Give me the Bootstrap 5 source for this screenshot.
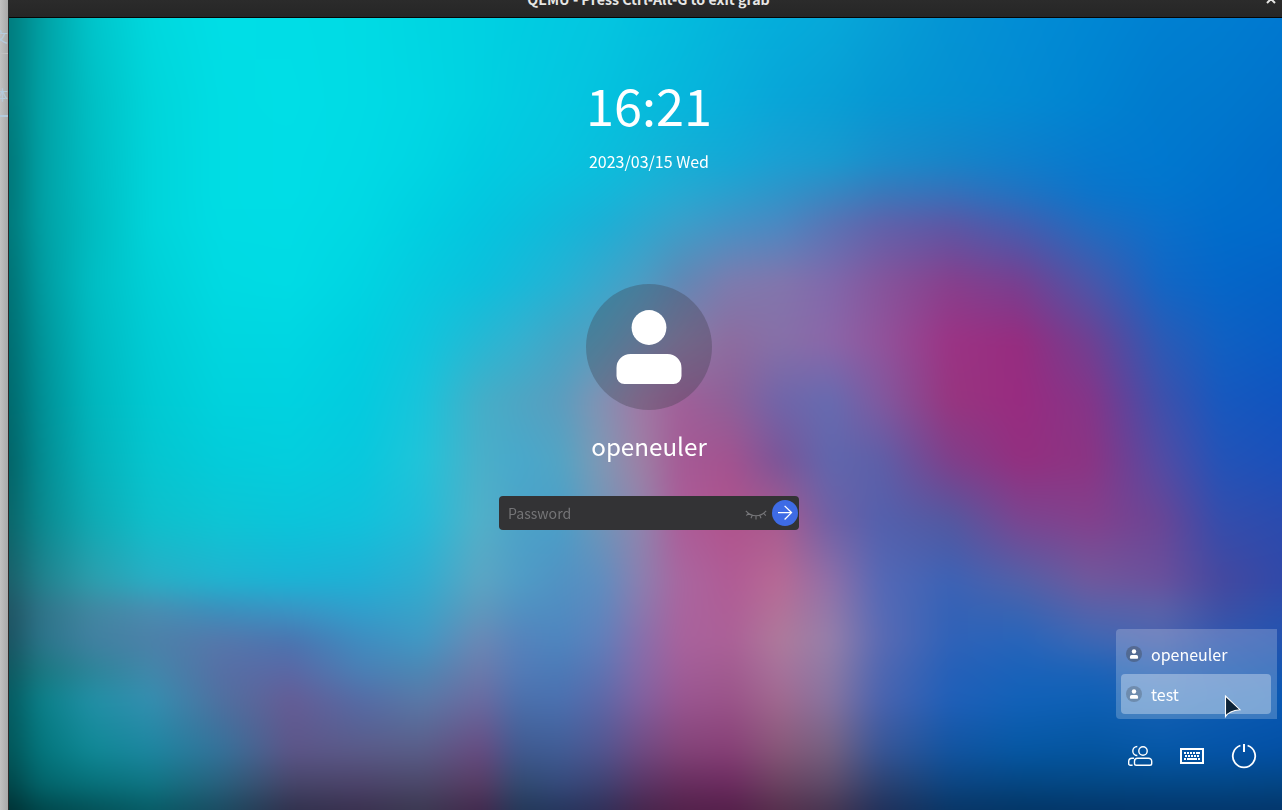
<!DOCTYPE html>
<html lang="en">
<head>
<meta charset="utf-8">
<meta name="viewport" content="width=device-width, initial-scale=1">
<title>QEMU</title>
<link href="https://cdn.jsdelivr.net/npm/bootstrap@5.3.0/dist/css/bootstrap.min.css" rel="stylesheet">
<style>
  body { font-family: "Noto Sans CJK SC", "Noto Sans", sans-serif; background: #b4b4b4; height: 810px; }
  .desk-edge { width: 8px; background: linear-gradient(90deg, #c1c1c1, #a9a9a9); color: #b4cbdd; font-size: 14px; line-height: 16px; }
  .desk-edge div { height: 20px; direction: rtl; white-space: nowrap; }
  .desk-edge .edge-a { margin-top: 28px; height: 26px; border-bottom: 1px solid #c0c0c0; }
  .desk-edge .edge-b { margin-top: 32px; height: 31px; border-bottom: 2px solid #b4cbdd; }
  .vm-window { border-left: 1px solid #2b2b2b; }
  .vm-title { height: 18px; background: linear-gradient(#2b2b2b, #262626); border-bottom: 1px solid #050505; color: #e6e6e4; font-size: 14.2px; font-weight: 700; padding-left: 6px; }
  .vm-title span { line-height: 22px; margin-top: -12px; }
  .vm-title svg { right: 6px; top: -6px; }
  .greeter { color: #fff; }
  .wallpaper { left: -40px; top: -40px; filter: blur(9px); }
  .clock { font-size: 50.5px; line-height: 60px; margin-top: 56px; }
  .date { font-size: 16px; line-height: 24px; margin-top: 15px; }
  .avatar { width: 126px; height: 126px; background: rgba(60,60,70,.32); margin-top: 111px; }
  .login-name { font-size: 24.2px; line-height: 36px; margin-top: 18px; }
  .password { width: 300px; height: 34px; background: #333335; border-radius: 4px; margin-top: 32px; padding-left: 9px; padding-right: 1px; }
  .password input { color: #fff; font-size: 14.1px; line-height: 22px; min-width: 0; }
  .password input::placeholder { color: #757577; opacity: 1; }
  .eye { margin-top: 3px; }
  .go { width: 26px; height: 26px; background: #3e6be5; margin-left: 5px; }
  .user-menu { right: 5px; top: 611px; width: 161px; height: 90px; background: rgba(255,255,255,.21); border-radius: 4px 0 0 4px; padding: 5px 6px 5px 5px; }
  .user-menu a { height: 40px; padding-left: 5px; color: #fff; font-size: 16px; line-height: 24px; border-radius: 4px; }
  .user-menu a.hovered { background: rgba(255,255,255,.33); }
  .user-menu svg { margin-right: 9px; }
  .tray { right: 25px; bottom: 40px; gap: 26px; }
  .pointer { left: 1215px; top: 676px; }
</style>
</head>
<body class="d-flex overflow-hidden">
<div class="desk-edge overflow-hidden flex-shrink-0">
  <div class="edge-a">文</div>
  <div class="edge-b">体</div>
</div>
<main class="vm-window flex-grow-1 d-flex flex-column overflow-hidden">
  <header class="vm-title position-relative d-flex justify-content-center overflow-hidden flex-shrink-0">
    <span>QEMU - Press Ctrl-Alt-G to exit grab</span>
    <svg class="position-absolute" width="10" height="10" viewBox="0 0 10 10" stroke="#e6e6e4" stroke-width="2"><path d="M1 1l8 8M9 1l-8 8"/></svg>
  </header>
  <section class="greeter position-relative flex-grow-1 overflow-hidden">
    <canvas id="wallpaper" class="wallpaper position-absolute" width="1353" height="872"></canvas>
    <div class="position-relative d-flex flex-column align-items-center" style="width:1280px">
      <div class="clock">16:21</div>
      <div class="date">2023/03/15 Wed</div>
      <div class="avatar rounded-circle">
        <svg width="126" height="126" viewBox="0 0 126 126" fill="#fff"><circle cx="63" cy="43.5" r="17.4"/><path d="M44.5 70h37a14 14 0 0 1 14 14v8a8 8 0 0 1-8 8h-49a8 8 0 0 1-8-8v-8a14 14 0 0 1 14-14z"/></svg>
      </div>
      <div class="login-name">openeuler</div>
      <form class="password d-flex align-items-center">
        <input class="form-control border-0 bg-transparent shadow-none p-0" type="text" placeholder="Password">
        <svg class="eye flex-shrink-0" width="22" height="12" viewBox="0 0 22 12" fill="none" stroke="#77777a" stroke-width="1.1"><path d="M.8 1.8Q5.5 6.8 11 6.8T21.2 1.8M3.5 4.2L1.4 6.6M7.2 6.2L6 9.2M11 6.8V10.4M14.8 6.2L16 9.2M18.5 4.2L20.8 6.6"/></svg>
        <button class="go btn rounded-circle border-0 p-0 d-flex flex-shrink-0" type="button" aria-label="Log in">
          <svg width="26" height="26" viewBox="0 0 26 26" fill="none" stroke="#fff" stroke-width="1.3"><path d="M6 12.6h13.500M12.600 5.900l6.900 6.700-6.900 6.900"/></svg>
        </button>
      </form>
    </div>
    <nav class="user-menu position-absolute d-flex flex-column">
      <a class="d-flex align-items-center text-decoration-none"><svg width="16" height="16" viewBox="0 0 16 16"><circle cx="8" cy="8" r="8" fill="#3f4650" fill-opacity=".42"/><circle cx="8" cy="5.5" r="2.2" fill="#fff"/><path d="M5.6 9h4.8a1.7 1.7 0 0 1 1.7 1.7v1.1a1 1 0 0 1-1 1H4.9a1 1 0 0 1-1-1v-1.100A1.700 1.700 0 0 1 5.600 9z" fill="#fff"/></svg>openeuler</a>
      <a class="hovered d-flex align-items-center text-decoration-none"><svg width="16" height="16" viewBox="0 0 16 16"><circle cx="8" cy="8" r="8" fill="#3f4650" fill-opacity=".3"/><circle cx="8" cy="5.500" r="2.200" fill="#fff"/><path d="M5.600 9h4.800a1.700 1.700 0 0 1 1.700 1.700v1.100a1 1 0 0 1-1 1H4.900a1 1 0 0 1-1-1v-1.100A1.700 1.700 0 0 1 5.600 9z" fill="#fff"/></svg>test</a>
    </nav>
    <div class="tray position-absolute d-flex align-items-center">
      <svg width="26" height="28" viewBox="0 0 26 28" fill="none" stroke="#fff" stroke-width="1.400"><circle cx="16" cy="9" r="4.200"/><path d="M10.300 4.500a4.500 4.500 0 0 0 0 9"/><path d="M10.500 16.300h11a3 3 0 0 1 3.200 3v2.200a1.800 1.800 0 0 1-1.800 1.800H9.300a1.800 1.800 0 0 1-1.800-1.800v-2.200a3 3 0 0 1 3-3zM7 16.300H5a3.300 3.300 0 0 0-3.300 3.300v2.100a1.600 1.600 0 0 0 1.600 1.600H5.600"/></svg>
      <svg width="26" height="28" viewBox="0 0 26 28" fill="none" stroke="#fff" stroke-width="2"><rect x="2" y="7" width="22" height="14"/><path stroke-dasharray="2 1" d="M5 11h13"/><path d="M17 11h4M8 17h10M5 17h2M19 17h2"/><path stroke-dasharray="2 1" d="M6 14h14"/></svg>
      <svg width="26" height="28" viewBox="0 0 26 28" fill="none" stroke="#fff" stroke-width="1.800"><path d="M9.400 3.500a11.200 11.200 0 1 0 7.200 0"/><path d="M13 2v8" stroke-width="2"/></svg>
    </div>
    <svg class="pointer position-absolute" width="20" height="26" viewBox="0 0 20 26"><path d="M1.500 2v20.500q3.500-5.700 14.500-6.800z" fill="#0d2236" stroke="#fff" stroke-width="1.100"/></svg>
  </section>
</main>
<script src="https://cdn.jsdelivr.net/npm/bootstrap@5.3.0/dist/js/bootstrap.bundle.min.js"></script>
<script>
// Colour mesh of the wallpaper: one row per y stop, one colour per x stop (window coordinates)
const xs = [9,40,90,150,220,290,360,420,480,520,560,600,640,680,730,780,830,880,950,1020,1090,1160,1220,1282];
const mesh = [
 [18,'007a7c 009fa3 00c4ca 00d8de 00dee6 00dde6 00dbe4 00d6e2 00d1e2 00cde1 02c9e1 04c6e0 03c0df 03bbdd 04b3dc 04addb 06a8d9 069fd6 0494d4 028dd5 0087d3 0080d1 007dd0 0078d0'],
 [100,'007a7c 00a0a4 00bfc4 00d5da 00dde4 00dee6 00dbe5 00d7e4 00d1e1 02cbe1 04c7e0 04c2df 05bcdc 06b6dc 08aeda 08a5d8 089fd5 0697d3 0590d2 038ad2 0083d1 007bce 0078cd 0073cb'],
 [160,'007577 00a0a4 00bdc3 00d4da 00dde4 00dde6 00dae5 00d5e3 00cce1 04c8e0 06c4df 0abedc 10b7d9 15afd6 14a8d6 1a9fd3 189acf 1a8dcb 1684c8 0f7ecb 067ace 0078cf 0073cc 006dca'],
 [193,'007577 00a0a4 00bcc2 00d4da 00dde4 00dde6 00d9e4 00d2e2 02c9e0 07c4de 0cbedc 12b8da 1cb1d6 25a9d2 2a9fce 2f94c9 3787c2 3a78ba 3670ba 2172c1 0c74ca 0375cd 0070cc 006cca'],
 [224,'007678 009fa3 00bbc0 00d4da 00dce4 00dce5 00d8e3 00cfe1 04c5df 0abfdc 12b8d9 1bb0d6 2ba8d0 3a9fca 4392c6 4a88c2 5874b5 5f62ab 5b57a5 425eb0 1f6cc0 0b6fca 006dcb 006acb'],
 [282,'007073 009a9f 00bdc3 00d0d7 00dae2 00dbe4 00d4e2 06cadf 0cc0dc 18b9d9 25b2d4 37a8cd 4b9dc4 6088b5 7d7bae 8275ac 8068ab 85559c 873f8c 773f90 4a56a9 1366c4 0566c8 0362c6'],
 [340,'006b6f 009499 00b9c0 00ccd5 00d6df 00d6e2 00cfe0 0ec6dd 25b8d4 35b0cf 44a5c6 559ec0 7290b5 8a7ea8 8d6c9f 8670a8 8b66a8 91539b 9b3384 962c7f 6f4092 2c5ab5 1060c2 085cc4'],
 [400,'00676b 008f95 00b5bc 00c9d2 00d2dd 00d2e0 03cbdf 18c4db 44aec8 4ea5c3 5a9dbf 8292b3 a078a5 a05f98 8e6098 7065a9 666bb0 80599f 97357f 982b80 843588 3f50ab 1758be 1054bf'],
 [460,'026266 038b91 05b0b8 05c5cf 03ccda 04cedd 08c8dd 20c4d9 4aafc9 48a8cb 52a4c4 7e98b5 9d80a5 a55a95 a3528f 7a5598 6066ad 5d5fa8 7f3f8a 932f7f 8b3483 534ba3 2353b7 1a50ba'],
 [520,'0a6468 0a888e 0fa9b2 0ebfcb 0dc5d4 0ac5da 10c2db 22bcd8 52b0c8 4ca2c8 4a9fc8 6f95b8 8f85ad ac5c98 b0538c a85a8f 6f60a5 5360ad 5358a0 7a4590 83408c 6a4595 344dac 2a4bae'],
 [580,'1a5e68 20808c 2c9dac 28aec5 20b3d0 1ab3d5 1fb0d5 2fadd0 5ca5c3 4f9cc6 5092c3 5e8ec0 8b7fb0 a9669f b05b95 b76a95 8f6fa8 5568b5 3c62b5 5260a8 70589c 6a509c 45489f 3148a8'],
 [610,'1f5362 2f7388 4186a0 4a8cb0 3c8ebc 3a94c4 309fcc 38a3c9 6098bc 5190c1 4f8cc1 5e87be 8978ae a9649e ae5e96 b37298 9278a9 576ab5 3462b6 3a64b2 5662aa 5a62a8 3d50a5 2a50ac'],
 [640,'1a5260 2a7489 4080a0 4c80a8 5577ab 4a74b0 3f8cc0 4098c4 6b88b5 5583bc 4d85bf 5f7fbb 876fac a8629c ab6097 ae7a9b 957faa 5a6ab3 2f62b8 2764ba 3d68b5 4a64b0 3058b0 2353b0'],
 [670,'0e575f 1a7780 2c8498 4187aa 566fa5 5a67a5 4a7fb5 4c87b4 6c7aab 527bb7 4b7ab7 5d74b3 8569a7 a15d98 a25b90 a7729a 8d7aa5 5067b1 2560b8 1a62b9 1c63b8 2a62b4 1d5ab2 1456b1'],
 [700,'045a60 0a7f88 208fa5 338fb0 4f70a0 655c95 556ba5 5978a7 6b6aa0 4b70ac 4a70b0 5c68a8 80609f 995590 9a5389 a0698f 86739f 4a63ae 1f5fb8 1161b8 0d60b5 1560b5 0d5cb3 0858b3'],
 [750,'025558 03757c 0f8895 1c86a0 34729a 5c5588 5a5a88 595d88 674b80 3f5a90 405c95 505590 6e4a82 824378 863f76 875778 746080 385595 1254a0 0557a3 0455a0 0558a8 0454a8 0350a5'],
 [785,'014548 02646a 066f78 0e7482 285f7c 454468 4b4268 4a4768 573a62 304a70 34497a 3d4272 573565 652d5d 6a2a5e 6a4260 5c4a68 2c4170 0c4480 044580 034783 034785 034785 034583'],
 [810,'003033 004549 034f55 065a64 1a4a60 30304c 39304e 3a3850 42284c 223858 25355c 2f2f58 45264c 52214a 541f4a 552f4c 453550 20305a 083565 033565 033568 03366b 03366b 03356a']
].map(([y, s]) => [y, s.split(' ').map(h => [0,2,4].map(i => parseInt(h.substr(i, 2), 16)))]);
const ys = mesh.map(r => r[0]);
// index of the cell holding v, and the fraction inside it
function cell(stops, v) {
  v = Math.max(stops[0], Math.min(stops[stops.length - 1], v));
  let i = 0;
  while (i < stops.length - 2 && v > stops[i + 1]) i++;
  return [i, (v - stops[i]) / (stops[i + 1] - stops[i])];
}
const canvas = document.getElementById('wallpaper'), ctx = canvas.getContext('2d');
const W = canvas.width, H = canvas.height, img = ctx.createImageData(W, H);
const cx = Array.from({length: W}, (_, x) => cell(xs, x - 31));
for (let y = 0; y < H; y++) {
  const [j, v] = cell(ys, y - 22), a = mesh[j][1], b = mesh[j + 1][1];
  for (let x = 0; x < W; x++) {
    const [i, u] = cx[x], o = (y * W + x) * 4;
    for (let c = 0; c < 3; c++)
      img.data[o + c] = (a[i][c] * (1 - u) + a[i + 1][c] * u) * (1 - v) + (b[i][c] * (1 - u) + b[i + 1][c] * u) * v;
    img.data[o + 3] = 255;
  }
}
ctx.putImageData(img, 0, 0);
</script>
</body>
</html>
